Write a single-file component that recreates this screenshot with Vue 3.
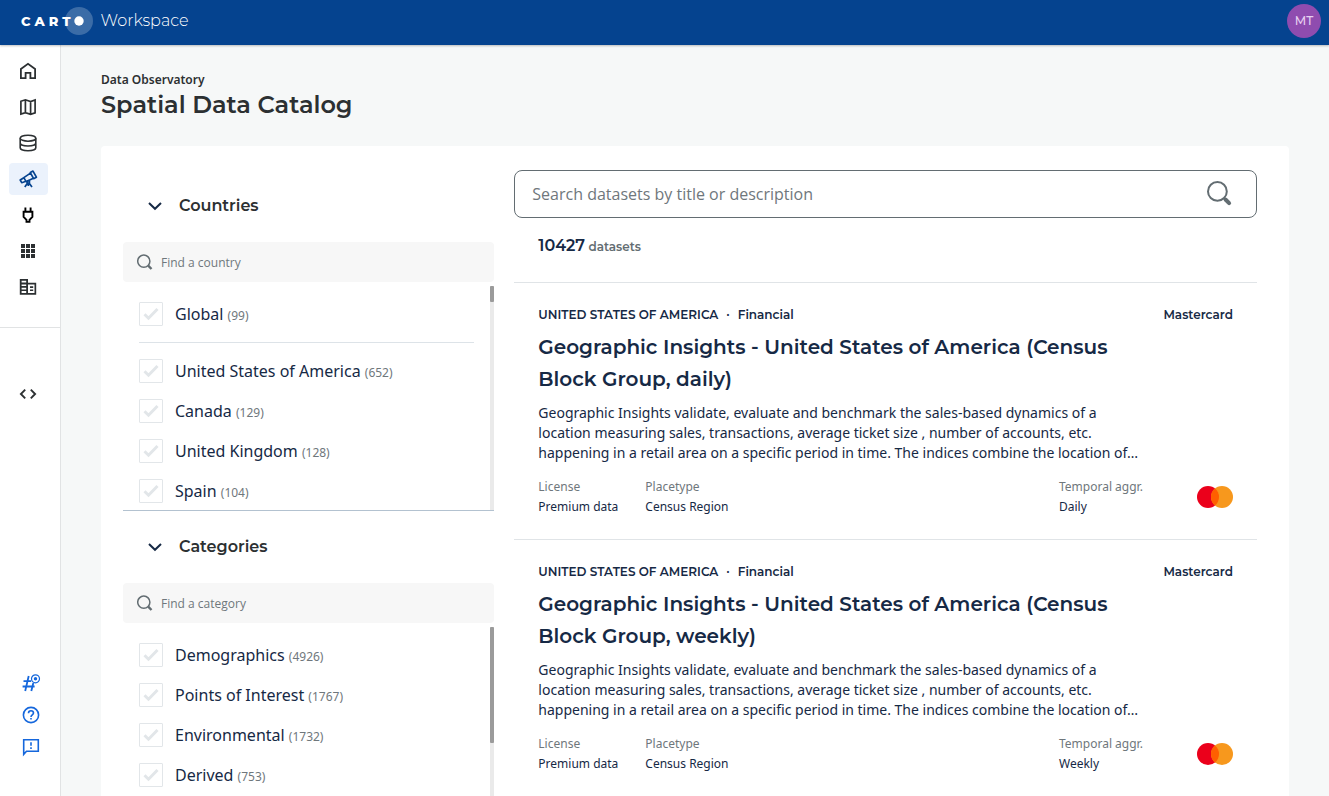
<script setup>
import { ref } from 'vue'

const mainNav = [
  { id: 'home', label: 'Home' },
  { id: 'maps', label: 'Maps' },
  { id: 'data', label: 'Data Explorer' },
  { id: 'observatory', label: 'Data Observatory', active: true },
  { id: 'connections', label: 'Connections' },
  { id: 'apps', label: 'Applications' },
  { id: 'organization', label: 'Organization' }
]
const supportNav = [
  { id: 'slack', label: 'Community' },
  { id: 'help', label: 'Help' },
  { id: 'feedback', label: 'Feedback' }
]

const filters = ref([
  {
    id: 'country',
    title: 'Countries',
    placeholder: 'Find a country',
    thumb: 7,
    options: [
      { name: 'Global', count: 99, separated: true },
      { name: 'United States of America', count: 652 },
      { name: 'Canada', count: 129 },
      { name: 'United Kingdom', count: 128 },
      { name: 'Spain', count: 104 }
    ]
  },
  {
    id: 'category',
    title: 'Categories',
    placeholder: 'Find a category',
    thumb: 52,
    options: [
      { name: 'Demographics', count: 4926 },
      { name: 'Points of Interest', count: 1767 },
      { name: 'Environmental', count: 1732 },
      { name: 'Derived', count: 753 }
    ]
  }
])

const description = [
  'Geographic Insights validate, evaluate and benchmark the sales-based dynamics of a',
  'location measuring sales, transactions, average ticket size , number of accounts, etc.',
  'happening in a retail area on a specific period in time. The indices combine the location of…'
].join('\n')

const datasets = ['Daily', 'Weekly'].map((frequency) => ({
  id: frequency,
  country: 'UNITED STATES OF AMERICA',
  category: 'Financial',
  provider: 'Mastercard',
  title: `Geographic Insights - United States of America (Census\nBlock Group, ${frequency.toLowerCase()})`,
  license: 'Premium data',
  placetype: 'Census Region',
  frequency
}))
</script>

<template>
  <div class="app">
    <header class="topbar">
      <a class="brand" href="#" aria-label="CARTO Workspace">
        <span class="wordmark"><span>C</span><span>A</span><span>R</span><span>T</span></span>
        <svg class="halo" width="28" height="28" viewBox="0 0 28 28" aria-hidden="true">
          <circle cx="14" cy="14" r="14" fill="#fff" opacity=".22" />
          <circle cx="14" cy="14" r="4.7" fill="#fff" />
        </svg>
        <span class="product">Workspace</span>
      </a>
      <button class="avatar" type="button" aria-label="Account">MT</button>
    </header>

    <div class="body">
      <nav class="sidebar" aria-label="Main">
        <div class="group main-group">
          <a v-for="item in mainNav" :key="item.id" href="#" class="nav-item" :class="{ active: item.active }" :aria-label="item.label">
            <svg width="24" height="24" viewBox="0 0 24 24" fill="none" stroke="currentColor" stroke-width="1.8" aria-hidden="true">
              <path v-if="item.id === 'home'" d="M4.9 19.1V9.9L12 4.8l7.1 5.1v9.2h-4.7v-5.3H9.6v5.3z" />
              <path v-else-if="item.id === 'maps'" stroke-width="1.7" d="M4.9 6.3 9.4 4.8l5.2 1.7 4.5-1.5v12.8l-4.5 1.5-5.2-1.7-4.5 1.5zM9.4 4.8v12.8M14.6 6.5v12.8" />
              <g v-else-if="item.id === 'data'" stroke-width="1.6">
                <ellipse cx="12" cy="7.2" rx="7.8" ry="3" />
                <path d="M4.2 7.2v9.6c0 1.7 3.5 3 7.8 3s7.8-1.3 7.8-3V7.2M4.2 12c0 1.7 3.5 3 7.8 3s7.8-1.3 7.8-3" />
              </g>
              <g v-else-if="item.id === 'observatory'" stroke-width="1.7" stroke-linejoin="round">
                <path d="m14.3 5.6 2.7-1.5 3.4 6.1-2.8 1.5zM14.5 6.1l-6.7 4.5 2.3 4.1 7.2-3.4M7.8 10.7l-3.6 2.3 1.5 2.7 4.4-1.4" />
                <circle cx="12.3" cy="14.9" r="1.3" />
                <path d="m11.6 15.9-2.8 4.1M13 15.9l3 4.1M12.3 16.4v2.6" />
              </g>
              <g v-else-if="item.id === 'connections'" stroke="#000" stroke-width="1.9">
                <path d="M9.4 4.5V9M14.6 4.5V9M7.6 8.8h8.8v5.1l-2.9 3v2h-3v-2l-2.9-3z" />
              </g>
              <path v-else-if="item.id === 'apps'" fill="currentColor" stroke="none" d="M5 5h4v4H5zm5 0h4v4h-4zm5 0h4v4h-4zM5 10h4v4H5zm5 0h4v4h-4zm5 0h4v4h-4zM5 15h4v4H5zm5 0h4v4h-4zm5 0h4v4h-4z" />
              <path v-else fill="currentColor" stroke="none" fill-rule="evenodd" d="M12 7.8V4H3.8v15.8h16.4V7.8zM10.2 18H5.6v-1.9h4.6zm0-3.6H5.6v-1.7h4.6zm0-3.3H5.6V9.4h4.6zm0-3.5H5.6V5.8h4.6zM18.5 18H12V9.5h6.5zM17.2 11.3h-3.2v1.6h3.2zm0 3.2h-3.2v1.6h3.2z" />
            </svg>
          </a>
        </div>
        <div class="group dev-group">
          <a href="#" class="nav-item" aria-label="Developers">
            <svg width="24" height="24" viewBox="0 0 24 24" fill="none" stroke="currentColor" stroke-width="1.9" aria-hidden="true">
              <path d="M9.2 7.7 4.9 12l4.3 4.3M14.8 7.7l4.3 4.3-4.3 4.3" />
            </svg>
          </a>
        </div>
        <div class="group support-group">
          <a v-for="item in supportNav" :key="item.id" href="#" class="support-item" :aria-label="item.label">
            <svg width="24" height="24" viewBox="0 0 24 24" fill="none" stroke="currentColor" stroke-width="1.6" aria-hidden="true">
              <g v-if="item.id === 'slack'">
                <path stroke-width="1.8" d="M9.7 5 6.2 20M14.3 12l-2 8M4.5 10.1h7.7M3.6 15.5h12" />
                <circle cx="16.5" cy="7.8" r="4" stroke-width="1.2" />
                <circle cx="16.5" cy="7.8" r="1.7" fill="currentColor" stroke="none" />
              </g>
              <g v-else-if="item.id === 'help'">
                <circle cx="12" cy="12" r="7.6" />
                <path d="M9.5 10.2c0-1.5 1.1-2.5 2.5-2.5s2.5 1 2.5 2.3c0 1.9-2.5 2-2.5 4M12 15v1.6" />
              </g>
              <g v-else>
                <path d="M4.7 19.3V4.8h14.6v11.4H7.5z" />
                <path d="M12 7.2v3.6M12 12.3v1.6" />
              </g>
            </svg>
          </a>
        </div>
      </nav>

      <main class="page">
        <p class="eyebrow">Data Observatory</p>
        <h1>Spatial Data Catalog</h1>

        <div class="catalog">
          <aside class="filters">
            <section v-for="filter in filters" :key="filter.id" class="filter">
              <h2>
                <button type="button" class="filter-toggle" aria-expanded="true">
                  <svg width="24" height="24" viewBox="0 0 24 24" fill="none" stroke="#162945" stroke-width="2" aria-hidden="true">
                    <path d="m6 9 6 5.8L18 9" />
                  </svg>
                  {{ filter.title }}
                </button>
              </h2>
              <label class="filter-search">
                <svg width="16" height="16" viewBox="0 0 16 16" fill="none" stroke="#636d72" aria-hidden="true">
                  <circle cx="6.8" cy="7.2" r="6.1" stroke-width="1.5" />
                  <path d="m11.2 11.7 3.3 3.3" stroke-width="2.4" />
                </svg>
                <input type="text" :placeholder="filter.placeholder" :aria-label="filter.placeholder" />
              </label>
              <div class="options">
                <ul>
                  <li v-for="option in filter.options" :key="option.name" :class="{ separated: option.separated }">
                    <label class="option">
                      <span class="tick">
                        <input type="checkbox" />
                        <svg width="16" height="14" viewBox="0 0 16 14" fill="none" stroke="#e2e6e9" stroke-width="3" aria-hidden="true">
                          <path d="m1.5 7.2 4 4L14.5 2" />
                        </svg>
                      </span>
                      <span class="option-name">{{ option.name }} <small>({{ option.count }})</small></span>
                    </label>
                  </li>
                </ul>
                <div class="track"><div class="thumb" :style="{ height: filter.thumb + '%' }"></div></div>
              </div>
            </section>
          </aside>

          <section class="results">
            <label class="search">
              <input type="search" placeholder="Search datasets by title or description" aria-label="Search datasets" />
              <svg width="26" height="26" viewBox="0 0 26 26" fill="none" stroke="#636d72" aria-hidden="true">
                <circle cx="11.4" cy="10.4" r="9.4" stroke-width="2" />
                <path d="m18 17 1.5 1.5" stroke-width="2" />
                <path d="m19.5 18.5 3.6 3.6" stroke-width="4" stroke-linecap="round" />
              </svg>
            </label>
            <p class="total"><strong>10427</strong> datasets</p>

            <article v-for="item in datasets" :key="item.id" class="dataset">
              <div class="tags">
                <span>{{ item.country }}</span>
                <span class="dot">·</span>
                <span>{{ item.category }}</span>
                <span class="provider">{{ item.provider }}</span>
              </div>
              <h3><a href="#">{{ item.title }}</a></h3>
              <p class="description">{{ description }}</p>
              <dl class="facts">
                <div><dt>License</dt><dd>{{ item.license }}</dd></div>
                <div><dt>Placetype</dt><dd>{{ item.placetype }}</dd></div>
                <div><dt>Temporal aggr.</dt><dd>{{ item.frequency }}</dd></div>
                <svg width="36" height="22" viewBox="0 0 36 22" role="img" aria-label="Mastercard">
                  <circle cx="11" cy="11" r="11" fill="#eb001b" />
                  <circle cx="25" cy="11" r="11" fill="#f7981d" />
                  <path d="M18 2.5a11 11 0 0 1 0 17 11 11 0 0 1 0-17z" fill="#ff5f00" />
                </svg>
              </dl>
            </article>
          </section>
        </div>
      </main>
    </div>
  </div>
</template>

<style>
body {
  margin: 0;
}
</style>

<style scoped>
.app {
  --heading: Montserrat, Inter, "Open Sans", sans-serif;
  --navy: #162945;
  --grey: #6f777c;
  display: flex;
  flex-direction: column;
  height: 100vh;
  overflow: hidden;
  background: #f6f8f8;
  color: var(--navy);
  font-family: "Noto Sans", "Open Sans", sans-serif;
}
*,
*::before {
  box-sizing: border-box;
}
h1, h2, h3, p, ul, dl, dd {
  margin: 0;
  padding: 0;
}
a {
  color: inherit;
  text-decoration: none;
}
button {
  border: 0;
  background: none;
  cursor: pointer;
}
svg {
  flex: none;
}

.topbar {
  display: flex;
  flex: none;
  align-items: center;
  justify-content: space-between;
  height: 45px;
  padding: 0 8px 4px 21px;
  background: #05438f;
  box-shadow: 0 1px 2px rgba(44, 48, 50, 0.3);
  z-index: 1;
}
.brand {
  display: flex;
  align-items: center;
  color: #fff;
}
.wordmark {
  display: flex;
  gap: 4px;
  font: 800 13px/16px var(--heading);
}
.halo {
  margin-left: -6px;
}
.product {
  margin-left: 8px;
  font: 300 16px/24px var(--heading);
}
.avatar {
  width: 34px;
  height: 34px;
  padding: 0;
  border-radius: 50%;
  background: #8f4caf;
  color: #e6cff0;
  font: 500 12px/34px var(--heading);
}

.body {
  display: flex;
  flex: 1;
  min-height: 0;
}
.sidebar {
  display: flex;
  flex: none;
  flex-direction: column;
  width: 61px;
  border-right: 1px solid #e1e3e4;
  background: #fff;
  color: #2c3032;
}
.group {
  display: flex;
  flex-direction: column;
}
.main-group {
  gap: 4px;
  padding: 10px 12px 24px 9px;
  border-bottom: 1px solid #e1e3e4;
}
.dev-group {
  padding: 50px 12px 0 9px;
}
.nav-item {
  display: flex;
  align-items: center;
  height: 32px;
  padding-left: 7px;
  border-radius: 4px;
}
.nav-item.active {
  background: #ebf2fc;
  color: #05438f;
}
.support-group {
  gap: 8px;
  margin-top: auto;
  padding: 0 0 37px 19px;
}
.support-item {
  display: flex;
  color: #1567dc;
}

.page {
  flex: 1;
  min-width: 0;
  padding: 27px 40px 0;
  overflow: hidden;
}
.eyebrow {
  color: #2c3032;
  font-size: 12px;
  font-weight: 600;
  line-height: 16px;
}
h1 {
  margin-bottom: 24px;
  color: #2c3032;
  font: 600 24px/34px var(--heading);
}
.catalog {
  display: grid;
  grid-template-columns: minmax(0, 1fr) minmax(0, 2fr);
  align-items: start;
  gap: 20px;
  padding: 24px 32px 32px 22px;
  border-radius: 4px;
  background: #fff;
}

.filter {
  border-bottom: 1px solid #b3c2d0;
}
.filter-toggle {
  display: flex;
  align-items: center;
  gap: 12px;
  width: 100%;
  height: 72px;
  padding: 0 20px;
  color: #2c3032;
  font: 600 16px/24px var(--heading);
}
.filter-search {
  display: flex;
  align-items: center;
  gap: 8px;
  height: 40px;
  padding: 0 14px;
  border-radius: 4px;
  background: #f7f7f7;
}
input {
  min-width: 0;
  padding: 0;
  border: 0;
  outline: 0;
  background: transparent;
  color: var(--navy);
  font-family: "Open Sans", sans-serif;
  appearance: none;
}
input::placeholder {
  color: var(--grey);
  opacity: 1;
}
.filter-search input {
  flex: 1;
  font-size: 12px;
}
.options {
  display: flex;
  height: 228px;
  padding-top: 4px;
}
ul {
  flex: 1;
  padding: 8px 16px 0;
  overflow: hidden;
  list-style: none;
}
.separated {
  margin-bottom: 8px;
  padding-bottom: 8px;
  border-bottom: 1px solid #dde3e8;
}
.option {
  display: flex;
  align-items: center;
  gap: 12px;
  height: 40px;
}
.tick {
  display: grid;
  width: 24px;
  height: 24px;
  place-items: center;
}
.tick > * {
  grid-area: 1 / 1;
}
.tick input {
  width: 24px;
  height: 24px;
  margin: 0;
  border: 1px solid #e2e6e9;
  border-radius: 1px;
}
.option-name {
  padding-top: 2px;
  font-size: 16px;
  line-height: 24px;
}
small {
  color: var(--grey);
  font-size: 12px;
}
.track {
  width: 4px;
  background: #eaeaea;
}
.thumb {
  border-radius: 1px;
  background: #9b9b9b;
}

.search {
  display: flex;
  align-items: center;
  height: 48px;
  padding: 0 24px 0 17px;
  border: 1px solid #636d72;
  border-radius: 8px;
}
.search input {
  flex: 1;
  font-size: 16px;
}
.total {
  padding: 16px 24px 24px;
  color: #636d72;
  font: 600 12px/24px var(--heading);
}
.total strong {
  color: var(--navy);
  font-size: 16px;
  font-weight: 600;
}
.dataset {
  padding: 24px 24px 22px;
  border-top: 1px solid #e0e4e7;
}
.results .total + .dataset {
  margin-top: -1px;
}
.tags {
  display: flex;
  gap: 8px;
  margin-bottom: 8px;
  font: 600 12px/16px var(--heading);
}
.provider {
  margin-left: auto;
}
h3 {
  margin-bottom: 8px;
  font: 600 20px/32px var(--heading);
  white-space: pre-line;
}
.description {
  margin-bottom: 14px;
  font-size: 14px;
  line-height: 20px;
  white-space: pre-line;
}
.facts {
  display: grid;
  grid-template-columns: 107px 1fr 138px 36px;
  align-items: center;
  font-size: 12px;
  line-height: 20px;
}
dt {
  color: var(--grey);
}
</style>
